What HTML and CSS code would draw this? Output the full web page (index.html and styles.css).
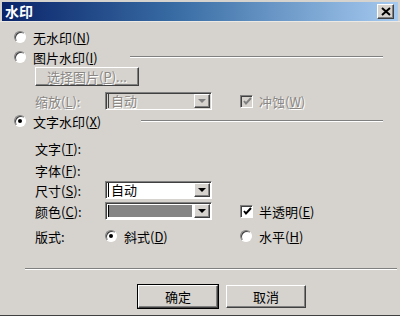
FILE: index.html
```html
<!DOCTYPE html>
<html>
<head>
<meta charset="utf-8">
<link rel="stylesheet" href="styles.css">
</head>
<body>
<div class="dlg">
  <div class="title">
    <span class="title-text">水印</span>
    <span class="close"><svg width="10" height="9" viewBox="0 0 10 9"><path d="M1 1L9 8M9 1L1 8" stroke="#000" stroke-width="2" fill="none"/></svg></span>
  </div>
  <div class="content">
    <div class="opt first"><span class="radio"></span><span>无水印(<u>N</u>)</span></div>
    <div class="opt"><span class="radio"></span><span>图片水印(<u>I</u>)</span><span class="gline g1"></span></div>
    <div class="row rbtn"><span class="btn pbtn dis">选择图片(<u>P</u>)...</span></div>
    <div class="row rzoom">
      <span class="dis">缩放(<u>L</u>):</span>
      <span class="combo cdis"><span class="field dis">自动</span><span class="drop"><span class="arrow garrow"></span></span></span>
      <span class="chkw"><span class="chk chkdis"><svg width="9" height="9" viewBox="0 0 9 9"><path d="M1 4L3 6.5L8 1" stroke="#808080" stroke-width="2" fill="none"/></svg></span><span class="dis">冲蚀(<u>W</u>)</span></span>
    </div>
    <div class="opt"><span class="radio on"></span><span>文字水印(<u>X</u>)</span><span class="gline g2"></span></div>
    <div class="row rtext"><span>文字(<u>T</u>):</span></div>
    <div class="row rfont"><span>字体(<u>F</u>):</span></div>
    <div class="row">
      <span>尺寸(<u>S</u>):</span>
      <span class="combo"><span class="field">自动</span><span class="drop"><span class="arrow"></span></span></span>
    </div>
    <div class="row rcolor">
      <span>颜色(<u>C</u>):</span>
      <span class="combo"><span class="field swatch"></span><span class="drop"><span class="arrow"></span></span></span>
      <span class="chkw"><span class="chk"><svg width="9" height="9" viewBox="0 0 9 9"><path d="M1 4L3 6.5L8 1" stroke="#000" stroke-width="2" fill="none"/></svg></span><span>半透明(<u>E</u>)</span></span>
    </div>
    <div class="row rlayout">
      <span>版式:</span>
      <span class="chkw"><span class="radio on"></span><span>斜式(<u>D</u>)</span></span>
      <span class="chkw"><span class="radio"></span><span>水平(<u>H</u>)</span></span>
    </div>
    <div class="sep"></div>
    <div class="buttons">
      <span class="btn dbtn">确定</span>
      <span class="btn">取消</span>
    </div>
  </div>
</div>
</body>
</html>
```

FILE: styles.css
```css
html, body {
  margin: 0;
  padding: 0;
}
body {
  width: 400px;
  height: 316px;
  background: #d6d3ce;
  font-family: "Noto Sans CJK SC", "Noto Sans", sans-serif;
  font-size: 13px;
  color: #000;
  overflow: hidden;
}
.dlg {
  height: 313px;
  border-bottom: 3px solid #404040;
  position: relative;
}
.title {
  margin: 2px 2px 0 2px;
  height: 19px;
  background: linear-gradient(to right, #0a246a 0%, #3a6ea5 45%, #a6caf0 100%);
  display: flex;
  align-items: center;
  justify-content: space-between;
}
.title-text {
  color: #fff;
  font-weight: bold;
  font-size: 14px;
  padding-left: 3px;
  line-height: 19px;
}
.close {
  width: 16px;
  height: 14px;
  margin-right: 4px;
  background: #d6d3ce;
  border: 1px solid;
  border-color: #fff #404040 #404040 #fff;
  box-shadow: inset -1px -1px 0 #808080;
  display: flex;
  align-items: center;
  justify-content: center;
  box-sizing: border-box;
  width: 17px;
  height: 15px;
}
.content {
  border-top: 1px solid #ece9e4;
}
u {
  text-decoration: underline;
  text-underline-offset: 1px;
}
.opt {
  display: flex;
  align-items: center;
  height: 20px;
  padding-left: 14px;
}
.opt.first {
  margin-top: 5px;
}
.radio {
  width: 12px;
  height: 12px;
  border-radius: 50%;
  box-sizing: border-box;
  background: #fff;
  border: 1px solid;
  border-color: #808080 #fff #fff #808080;
  box-shadow: inset 1px 1px 0 #404040;
  margin-right: 7px;
  flex: none;
  position: relative;
}
.radio.on::after {
  content: "";
  position: absolute;
  left: 3px;
  top: 3px;
  width: 4px;
  height: 4px;
  border-radius: 50%;
  background: #000;
}
.gline {
  height: 0;
  border-top: 1px solid #808080;
  border-bottom: 1px solid #fff;
  flex: 1;
  margin-right: 17px;
}
.g1 { margin-left: 32px; }
.g2 { margin-left: 40px; }
.row {
  display: grid;
  grid-template-columns: 70px 135px 1fr;
  align-items: center;
  height: 20px;
  padding-left: 35px;
}
.rbtn {
  display: block;
  height: 20px;
}
.rzoom { margin-top: 4px; }
.rtext { margin-top: 7px; }
.rfont { margin-top: 2px; }
.rcolor { margin-top: 1px; }
.rlayout { margin-top: 5px; }
.dis {
  color: #8a8784;
  text-shadow: 1px 1px 0 #fff;
}
.btn {
  display: inline-flex;
  align-items: center;
  justify-content: center;
  box-sizing: border-box;
  background: #d6d3ce;
  border: 1px solid;
  border-color: #fff #404040 #404040 #fff;
  box-shadow: inset -1px -1px 0 #808080;
}
.pbtn {
  width: 104px;
  height: 19px;
}
.combo {
  display: flex;
  box-sizing: border-box;
  width: 107px;
  height: 18px;
  border: 1px solid;
  border-color: #808080 #fff #fff #808080;
  box-shadow: inset 1px 1px 0 #404040;
  background: #fff;
  padding: 1px 1px 1px 1px;
}
.cdis {
  background: #d6d3ce;
}
.field {
  flex: 1;
  line-height: 14px;
  padding-left: 2px;
  border-left: 1px solid #000;
  margin-left: 1px;
}
.cdis .field {
  border-left: 1px solid #404040;
}
.swatch {
  background: #858585;
  margin: 1px 2px 1px 1px;
}
.drop {
  width: 16px;
  height: 14px;
  box-sizing: border-box;
  background: #d6d3ce;
  border: 1px solid;
  border-color: #fff #404040 #404040 #fff;
  box-shadow: inset -1px -1px 0 #808080;
  display: flex;
  align-items: center;
  justify-content: center;
}
.arrow {
  width: 0;
  height: 0;
  border-left: 4px solid transparent;
  border-right: 4px solid transparent;
  border-top: 4px solid #000;
}
.garrow {
  border-top-color: #808080;
}
.chkw {
  display: flex;
  align-items: center;
}
.rzoom .chkw, .rcolor .chkw {
  grid-column: 3;
}
.chk {
  width: 13px;
  height: 13px;
  box-sizing: border-box;
  background: #fff;
  border: 1px solid;
  border-color: #808080 #fff #fff #808080;
  box-shadow: inset 1px 1px 0 #404040;
  margin-right: 6px;
  display: flex;
  align-items: center;
  justify-content: center;
  padding: 1px 0 0 1px;
}
.chkdis {
  background: #d6d3ce;
}
.sep {
  margin: 22px 3px 0 25px;
  border-top: 1px solid #808080;
  border-bottom: 1px solid #fff;
}
.buttons {
  display: flex;
  gap: 8px;
  padding-left: 138px;
  margin-top: 15px;
}
.buttons .btn {
  width: 80px;
  height: 23px;
}
.dbtn {
  outline: 1px solid #000;
  outline-offset: 0;
  border-color: #fff #404040 #404040 #fff;
}
```
